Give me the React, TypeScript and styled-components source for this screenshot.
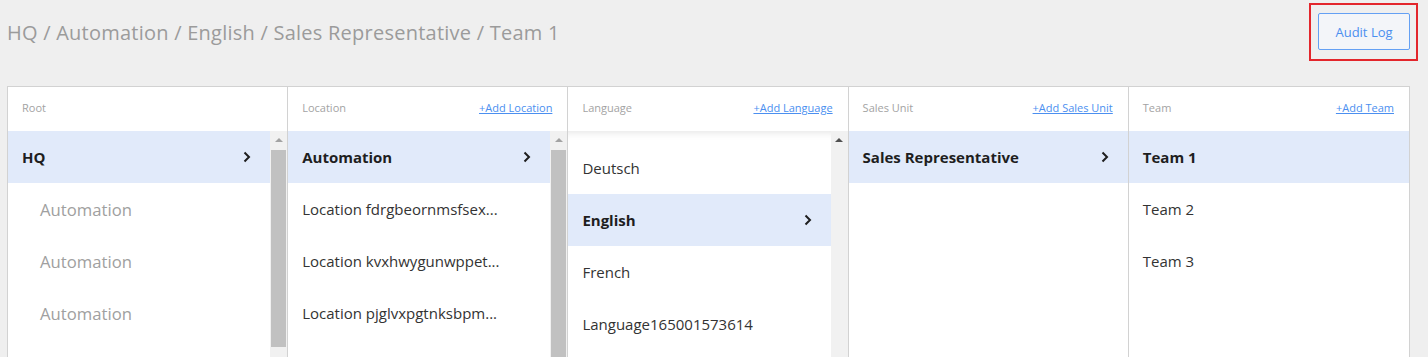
import styled, { createGlobalStyle } from "styled-components";

const GlobalStyle = createGlobalStyle`
  html, body {
    margin: 0;
    padding: 0;
    background: #efefef;
    font-family: "Open Sans", "Liberation Sans", sans-serif;
    overflow: hidden;
  }
`;

const Page = styled.div`
  width: 1428px;
  height: 357px;
  padding: 3px 10px 0 7px;
  box-sizing: border-box;
`;

const TopBar = styled.div`
  display: flex;
  align-items: center;
  justify-content: space-between;
  height: 58px;
  margin-bottom: 25px;
`;

const Breadcrumb = styled.div`
  font-size: 20px;
  color: #9b9b9b;
  letter-spacing: 0.24px;
`;

const Highlight = styled.div`
  border: 2px solid #e3262c;
  padding: 8px 6px 9px 7px;
`;

const AuditButton = styled.button`
  width: 92px;
  height: 37px;
  border: 1px solid #64a0f4;
  border-radius: 2px;
  background: #f3f5f9;
  color: #4b8ff0;
  font-family: inherit;
  font-size: 13px;
`;

const Panel = styled.div`
  display: grid;
  grid-template-columns: repeat(5, 1fr);
  margin-right: 8px;
  height: 290px;
  background: #fff;
  border: 1px solid #d2d2d2;
  border-bottom: none;
`;

const Column = styled.div<{ $last?: boolean }>`
  display: flex;
  flex-direction: column;
  min-width: 0;
  border-right: ${(p) => (p.$last ? "none" : "1px solid #d2d2d2")};
`;

const ColumnHeader = styled.div`
  display: flex;
  align-items: center;
  justify-content: space-between;
  height: 44px;
  padding: 0 15px 4px 14px;
  box-sizing: border-box;
  font-size: 11px;
`;

const HeaderLabel = styled.span`
  color: #a3a3a3;
`;

const AddLink = styled.a`
  color: #4b8ff0;
  text-decoration: underline;
`;

const ColumnBody = styled.div`
  display: flex;
  flex: 1;
  min-height: 0;
`;

const List = styled.div<{ $shadow?: boolean }>`
  flex: 1;
  min-width: 0;
  padding-top: ${(p) => (p.$shadow ? "11px" : "0")};
  box-shadow: ${(p) =>
    p.$shadow ? "inset 0 9px 8px -8px rgba(0, 0, 0, 0.12)" : "none"};
`;

const Row = styled.div<{ $selected?: boolean; $child?: boolean }>`
  display: flex;
  align-items: center;
  justify-content: space-between;
  height: 52px;
  padding: 0 19px 0 ${(p) => (p.$child ? "32px" : "14px")};
  background: ${(p) => (p.$selected ? "#e1eafa" : "transparent")};
  color: ${(p) => (p.$child ? "#a0a0a0" : p.$selected ? "#1e1e1e" : "#333")};
  font-size: ${(p) => (p.$child ? "16.7px" : "15px")};
  font-weight: ${(p) => (p.$selected ? 700 : 400)};
  white-space: nowrap;
`;

const Scrollbar = styled.div`
  display: flex;
  flex-direction: column;
  align-items: center;
  width: 17px;
  background: #f1f1f1;
`;

const ArrowUp = styled.div<{ $dark?: boolean }>`
  margin-top: 7px;
  width: 0;
  height: 0;
  border-left: 4px solid transparent;
  border-right: 4px solid transparent;
  border-bottom: 4px solid ${(p) => (p.$dark ? "#505050" : "#a3a3a3")};
`;

const Thumb = styled.div<{ $height: number }>`
  margin-top: 8px;
  width: 15px;
  height: ${(p) => p.$height}px;
  background: #c1c1c1;
`;

const Chevron = () => (
  <svg width="8" height="12" viewBox="0 0 8 12" fill="none">
    <path d="M1.5 1.5 L6 6 L1.5 10.5" stroke="#1e1e1e" strokeWidth="2" />
  </svg>
);

type Item = { label: string; selected?: boolean; child?: boolean; chevron?: boolean };

type ColumnData = {
  title: string;
  add?: string;
  items: Item[];
  scroll?: { thumb?: number; dark?: boolean };
  shadow?: boolean;
};

const columns: ColumnData[] = [
  {
    title: "Root",
    items: [
      { label: "HQ", selected: true, chevron: true },
      { label: "Automation", child: true },
      { label: "Automation", child: true },
      { label: "Automation", child: true },
    ],
    scroll: { thumb: 197 },
  },
  {
    title: "Location",
    add: "+Add Location",
    items: [
      { label: "Automation", selected: true, chevron: true },
      { label: "Location fdrgbeornmsfsex..." },
      { label: "Location kvxhwygunwppet..." },
      { label: "Location pjglvxpgtnksbpm..." },
    ],
    scroll: { thumb: 260 },
  },
  {
    title: "Language",
    add: "+Add Language",
    items: [
      { label: "Deutsch" },
      { label: "English", selected: true, chevron: true },
      { label: "French" },
      { label: "Language165001573614" },
    ],
    scroll: { dark: true },
    shadow: true,
  },
  {
    title: "Sales Unit",
    add: "+Add Sales Unit",
    items: [{ label: "Sales Representative", selected: true, chevron: true }],
  },
  {
    title: "Team",
    add: "+Add Team",
    items: [{ label: "Team 1", selected: true }, { label: "Team 2" }, { label: "Team 3" }],
  },
];

export default function App() {
  return (
    <>
      <GlobalStyle />
      <Page>
        <TopBar>
          <Breadcrumb>HQ / Automation / English / Sales Representative / Team 1</Breadcrumb>
          <Highlight>
            <AuditButton>Audit Log</AuditButton>
          </Highlight>
        </TopBar>
        <Panel>
          {columns.map((col, i) => (
            <Column key={col.title} $last={i === columns.length - 1}>
              <ColumnHeader>
                <HeaderLabel>{col.title}</HeaderLabel>
                {col.add && <AddLink>{col.add}</AddLink>}
              </ColumnHeader>
              <ColumnBody>
                <List $shadow={col.shadow}>
                  {col.items.map((item, j) => (
                    <Row key={j} $selected={item.selected} $child={item.child}>
                      <span>{item.label}</span>
                      {item.chevron && <Chevron />}
                    </Row>
                  ))}
                </List>
                {col.scroll && (
                  <Scrollbar>
                    <ArrowUp $dark={col.scroll.dark} />
                    {col.scroll.thumb && <Thumb $height={col.scroll.thumb} />}
                  </Scrollbar>
                )}
              </ColumnBody>
            </Column>
          ))}
        </Panel>
      </Page>
    </>
  );
}
